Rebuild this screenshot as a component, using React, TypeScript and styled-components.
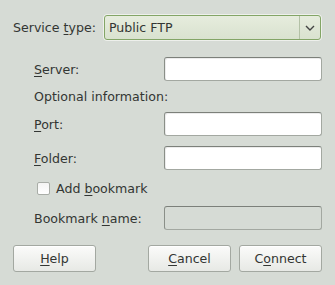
import React from 'react'
import styled, { createGlobalStyle } from 'styled-components'

const GlobalStyle = createGlobalStyle`
  html, body {
    margin: 0;
    padding: 0;
    background: #d6dbd5;
  }
  body {
    font-family: "DejaVu Sans", sans-serif;
    font-size: 12.6px;
    color: #333633;
  }
`

const Dialog = styled.div`
  width: 335px;
  height: 285px;
  box-sizing: border-box;
  padding: 14px 13px 0 13px;
  display: flex;
  flex-direction: column;
  background: #d6dbd5;
`

const Row = styled.div<{ h: number; mt?: number; indent?: number }>`
  display: flex;
  align-items: center;
  height: ${({ h }) => h}px;
  margin-top: ${({ mt }) => mt || 0}px;
  padding-left: ${({ indent }) => indent || 0}px;
`

const Label = styled.span<{ w?: number }>`
  flex: ${({ w }) => (w ? `0 0 ${w}px` : '1 1 auto')};
  white-space: nowrap;
`

const Mn = styled.u`
  text-decoration-thickness: 1px;
  text-underline-offset: 2px;
`

const Combo = styled.div`
  flex: 1;
  height: 27px;
  box-sizing: border-box;
  border: 1px solid #eef0ec;
  border-radius: 4px;
  display: flex;
  background: #eef0ec;
`

const ComboInner = styled.div`
  flex: 1;
  display: flex;
  border: 1px solid #83a566;
  border-radius: 3px;
  background: linear-gradient(#e6ecdd, #d9e2cf);
`

const ComboText = styled.span`
  flex: 1;
  padding-left: 4px;
  display: flex;
  align-items: center;
`

const ComboArrow = styled.span`
  width: 20px;
  border-left: 1px solid #b3c1a6;
  display: flex;
  align-items: center;
  justify-content: center;
`

const Entry = styled.div<{ disabled?: boolean }>`
  width: 158px;
  height: 24px;
  box-sizing: border-box;
  margin-left: auto;
  border: 1px solid #a3a8a1;
  border-top-color: #7c807a;
  border-left-color: #8a8f88;
  border-radius: 3px;
  background: ${({ disabled }) => (disabled ? '#d6dbd5' : '#ffffff')};
  box-shadow: ${({ disabled }) => (disabled ? 'none' : 'inset 1px 1px 0 #ececec')};
`

const Check = styled.span`
  width: 13px;
  height: 13px;
  box-sizing: border-box;
  border: 1px solid #a9ada7;
  border-radius: 2px;
  background: linear-gradient(#f4f4f3, #ffffff);
  margin-left: 3px;
  margin-right: 6px;
`

const ButtonRow = styled.div`
  display: flex;
  margin-top: 15px;
  gap: 8px;
`

const Button = styled.button<{ push?: boolean }>`
  width: 83px;
  height: 27px;
  box-sizing: border-box;
  margin-left: ${({ push }) => (push ? 'auto' : '0')};
  border: 1px solid #a3a8a1;
  border-radius: 3px;
  background: linear-gradient(#fbfbfa, #e7e9e5);
  font: inherit;
  color: #333633;
  padding: 0;
  box-shadow: inset 0 1px 0 #ffffff;
`

export default function App() {
  return (
    <>
      <GlobalStyle />
      <Dialog>
        <Row h={27}>
          <Label w={90}>
            Service <Mn>t</Mn>ype:
          </Label>
          <Combo>
            <ComboInner>
              <ComboText>Public FTP</ComboText>
              <ComboArrow>
                <svg width="10" height="6" viewBox="0 0 10 6">
                  <path d="M1 1 L5 5 L9 1" fill="none" stroke="#444" strokeWidth="1.4" />
                </svg>
              </ComboArrow>
            </ComboInner>
          </Combo>
        </Row>
        <Row h={24} mt={16} indent={21}>
          <Label>
            <Mn>S</Mn>erver:
          </Label>
          <Entry />
        </Row>
        <Row h={31} indent={21}>
          <Label>Optional information:</Label>
        </Row>
        <Row h={24} indent={21}>
          <Label>
            <Mn>P</Mn>ort:
          </Label>
          <Entry />
        </Row>
        <Row h={24} mt={10} indent={21}>
          <Label>
            <Mn>F</Mn>older:
          </Label>
          <Entry />
        </Row>
        <Row h={36} indent={21}>
          <Check />
          <Label>
            Add <Mn>b</Mn>ookmark
          </Label>
        </Row>
        <Row h={24} indent={21}>
          <Label>
            Bookmark <Mn>n</Mn>ame:
          </Label>
          <Entry disabled />
        </Row>
        <ButtonRow>
          <Button>
            <Mn>H</Mn>elp
          </Button>
          <Button push>
            <Mn>C</Mn>ancel
          </Button>
          <Button>
            C<Mn>o</Mn>nnect
          </Button>
        </ButtonRow>
      </Dialog>
    </>
  )
}
